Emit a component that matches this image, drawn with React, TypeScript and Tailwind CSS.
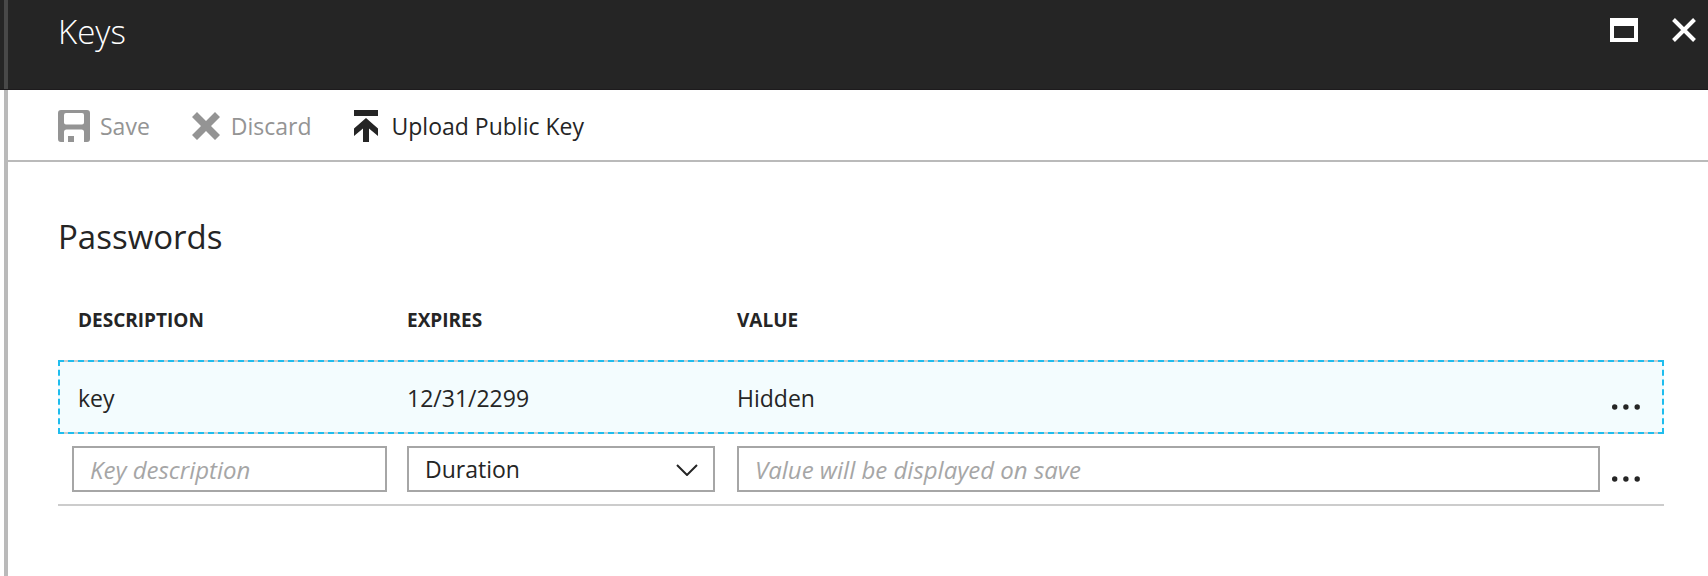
import React from "react";

function SaveIcon() {
  return (
    <svg aria-hidden="true" className="size-8" viewBox="0 0 32 32" fill="currentColor">
      <path
        fillRule="evenodd"
        d="M3 0H29Q32 0 32 3V29Q32 32 29 32H26V22Q26 19.500 23.500 19.500H8.500Q6 19.500 6 22V32H3Q0 32 0 29V3Q0 0 3 0ZM8 3Q6 3 6 5V12.500Q6 14.500 8 14.500H24Q26 14.500 26 12.500V5Q26 3 24 3Z"
      />
      <path d="M10 26H16V32H10Z" />
    </svg>
  );
}

function DiscardIcon() {
  return (
    <svg aria-hidden="true" className="size-7" viewBox="0 0 28 28" fill="currentColor">
      <path d="M5 0L14 9L23 0L28 5L19 14L28 23L23 28L14 19L5 28L0 23L9 14L0 5Z" />
    </svg>
  );
}

function UploadIcon() {
  return (
    <svg aria-hidden="true" className="h-8 w-6" viewBox="0 0 24 32" fill="currentColor">
      <path d="M0 0H24V6H0ZM12 8L24 18.500V26L15 18.500V32H9V18.500L0 26V18.500Z" />
    </svg>
  );
}

function MoreButton({ label }: { label: string }) {
  return (
    <button type="button" aria-label={label} className="flex h-8 w-full items-center pl-3">
      <svg aria-hidden="true" className="h-6 w-7" viewBox="0 0 28 24" fill="currentColor">
        <circle cx="2.700" cy="12" r="2.700" />
        <circle cx="13.900" cy="12" r="2.700" />
        <circle cx="25.200" cy="12" r="2.700" />
      </svg>
    </button>
  );
}

const field =
  "block h-[46px] w-full rounded-none border-2 border-[#a6a6a6] bg-white px-4 leading-7 outline-none placeholder:italic placeholder:text-[#a6a6a6] placeholder:opacity-100";

export default function App() {
  return (
    <main className="min-h-screen bg-white font-['Open_Sans','Noto_Sans',sans-serif] text-[23px] text-[#252525]">
      <div className="flex min-h-screen flex-col">
        <header className="flex h-[90px] border-b border-[#1d1b1d] bg-[#252525] pl-1 text-white">
          <div className="flex flex-1 items-start justify-between border-l-4 border-[#484848] pr-3 pl-[50px]">
            <h1 className="pt-2 text-[33px] leading-12 font-light">Keys</h1>
            <div className="flex gap-[34px] pt-[18px]">
              <button type="button" aria-label="Maximize">
                <svg aria-hidden="true" className="h-6 w-7" viewBox="0 0 28 24" fill="currentColor">
                  <path fillRule="evenodd" d="M0 0H28V24H0ZM4 8V20H24V8Z" />
                </svg>
              </button>
              <button type="button" aria-label="Close">
                <svg aria-hidden="true" className="size-6" viewBox="0 0 24 24" fill="none" stroke="currentColor" strokeWidth="4">
                  <path d="M1.500 1.500L22.500 22.500M22.500 1.500L1.500 22.500" />
                </svg>
              </button>
            </div>
          </div>
        </header>

        <div className="flex flex-1 pl-1">
          <div className="min-w-0 flex-1 border-l-4 border-[#bababa]">
            <div className="flex h-[72px] items-center gap-[42px] border-b-2 border-[#bababa] pt-[2px] pl-[50px]">
              <button type="button" disabled className="flex items-center gap-[10px] text-[#949494]">
                <SaveIcon />
                Save
              </button>
              <button type="button" disabled className="flex items-center gap-[11px] text-[#949494]">
                <DiscardIcon />
                Discard
              </button>
              <button type="button" className="flex items-center gap-[14px]">
                <UploadIcon />
                Upload Public Key
              </button>
            </div>

            <section className="pt-[51px] pr-11 pl-[50px]">
              <h2 className="text-[33px] leading-12">Passwords</h2>
              <table className="mt-[19px] w-full table-fixed border-separate border-spacing-0 text-left">
                <colgroup>
                  <col className="w-[349px]" />
                  <col className="w-[330px]" />
                  <col />
                  <col className="w-16" />
                </colgroup>
                <thead>
                  <tr className="h-20 text-[19px] leading-6">
                    <th className="pl-5 font-bold">DESCRIPTION</th>
                    <th className="font-bold">EXPIRES</th>
                    <th className="font-bold">VALUE</th>
                    <td />
                  </tr>
                </thead>
                <tbody>
                  <tr className="h-[74px] bg-[#f3fcfe] outline-2 -outline-offset-2 outline-[#1fbdee] outline-dashed">
                    <td className="border-y-2 border-[#cccccc] pt-[2px] pl-5">key</td>
                    <td className="border-y-2 border-[#cccccc] pt-[2px]">12/31/2299</td>
                    <td className="border-y-2 border-[#cccccc] pt-[2px]">Hidden</td>
                    <td className="border-y-2 border-[#cccccc] pt-5">
                      <MoreButton label="Actions for key" />
                    </td>
                  </tr>
                  <tr className="h-[72px]">
                    <td className="border-b-2 border-[#cccccc] pr-5 pl-[14px]">
                      <input type="text" aria-label="Key description" placeholder="Key description" className={`${field} text-[24px]`} />
                    </td>
                    <td className="border-b-2 border-[#cccccc] pr-[22px]">
                      <div className="relative">
                        <select aria-label="Duration" className={`${field} appearance-none text-[23px]`}>
                          <option>Duration</option>
                        </select>
                        <svg
                          aria-hidden="true"
                          className="pointer-events-none absolute top-[18px] right-[17px] h-3 w-[22px]"
                          viewBox="0 0 22 12"
                          fill="none"
                          stroke="currentColor"
                          strokeWidth="2"
                        >
                          <path d="M1 1L11 11L21 1" />
                        </svg>
                      </div>
                    </td>
                    <td className="border-b-2 border-[#cccccc]">
                      <input type="text" aria-label="Value" placeholder="Value will be displayed on save" className={`${field} text-[24px]`} />
                    </td>
                    <td className="border-b-2 border-[#cccccc] pt-5">
                      <MoreButton label="Actions for new key" />
                    </td>
                  </tr>
                </tbody>
              </table>
            </section>
          </div>
        </div>
      </div>
    </main>
  );
}
